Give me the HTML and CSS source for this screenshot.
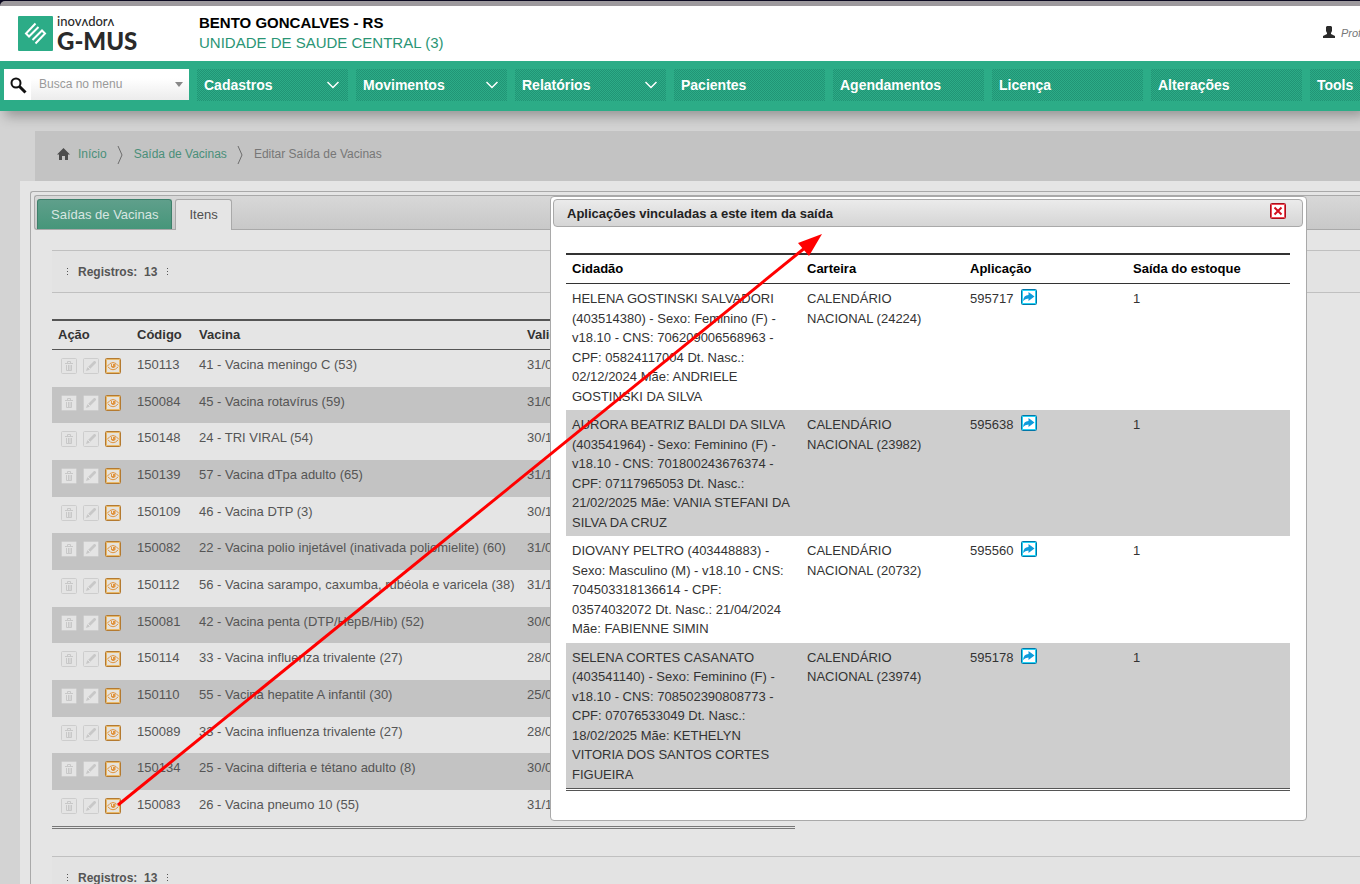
FILE: index.html
```html
<!DOCTYPE html>
<html lang="pt-BR">
<head>
    <meta charset="UTF-8">
    <meta name="viewport" content="width=device-width, initial-scale=1.0">
    <title>G-MUS - Editar Saída de Vacinas</title>
    <link rel="stylesheet" href="styles.css">
</head>
<body>
    <!-- Icon definitions -->
    <svg class="sprite" aria-hidden="true">
        <symbol id="icon-trash" viewBox="0 0 16 16">
            <rect x="0.5" y="0.5" width="15" height="15" rx="1" fill="#e4e4e4" stroke="#cdcdcd"/>
            <path d="M4 5.5h8M6.5 5V3.5h3V5" fill="none" stroke="#c8c8c8"/>
            <path d="M5.5 7v5.5h5V7" fill="none" stroke="#c8c8c8"/>
            <path d="M7.5 7v5M9 7v5" stroke="#c8c8c8"/>
        </symbol>
        <symbol id="icon-edit" viewBox="0 0 16 16">
            <rect x="0.5" y="0.5" width="15" height="15" rx="1" fill="#e4e4e4" stroke="#cdcdcd"/>
            <path d="M3 13l1-3 7-7h1l1 1v1l-7 7z" fill="#c8c8c8"/>
            <path d="M5 9l2 2" stroke="#e4e4e4"/>
        </symbol>
        <symbol id="icon-view" viewBox="0 0 16 16">
            <rect x="0.5" y="0.5" width="15" height="15" rx="1" fill="#e6e3dd" stroke="#b47a30"/>
            <rect x="1.5" y="1.5" width="13" height="13" fill="none" stroke="#e8b868"/>
            <path d="M2 8.5Q5 4.5 8 4.500Q11 4.500 14 8.500" fill="none" stroke="#df9440"/>
            <path d="M3 9Q8 14.500 13 9" fill="none" stroke="#df9440"/>
            <path d="M6 6h4.500v2.500L9 10H7.500L6 8.500z" fill="#df9440"/>
            <rect x="7" y="6" width="1" height="2" fill="#f4e6d0"/>
        </symbol>
        <symbol id="icon-share" viewBox="0 0 16 16">
            <rect x="0.5" y="0.5" width="15" height="15" rx="1" fill="#fff" stroke="#0077a8"/>
            <rect x="1.5" y="1.5" width="13" height="13" fill="none" stroke="#25d2f5"/>
            <path d="M2 12Q2.500 6 7.500 6V3L13.500 7.500L7.500 12V9.500Q4 9.500 2 12z" fill="#0e9cdb"/>
        </symbol>
        <symbol id="icon-chevron" viewBox="0 0 12 8">
            <path d="M0.5 1L6 6.5L11.5 1" fill="none" stroke="#fff" stroke-width="1.5"/>
        </symbol>
        <symbol id="icon-separator" viewBox="0 0 6 18">
            <path d="M1 0L5 9L1 18" fill="none" stroke="#6c6c6c"/>
        </symbol>
    </svg>

    <div class="window-edge"></div>

    <header class="header">
        <a href="#" class="logo" aria-label="Inovadora G-MUS">
            <svg class="logo-mark" viewBox="0 0 35 35" aria-hidden="true">
                <rect width="35" height="35" rx="1" fill="#2cac87"/>
                <path d="M17.5 7.5L8 17.5L11 20.5L20.5 11M17.5 27.5L27 17.5L24 14.5L14.5 24" fill="none" stroke="#fff" stroke-width="2"/>
            </svg>
            <span class="logo-text">
                <span class="logo-small">inovʌdorʌ</span>
                <span class="logo-big">G-MUS</span>
            </span>
        </a>
        <div class="unit">
            <strong>BENTO GONCALVES - RS</strong>
            <span>UNIDADE DE SAUDE CENTRAL (3)</span>
        </div>
        <div class="user">
            <svg width="12" height="12" viewBox="0 0 12 12" aria-hidden="true">
                <path d="M4 0h4l1 1v4L8 7v1l4 2v2H0v-2l4-2V7L3 5V1z" fill="#2b2b2b"/>
            </svg>
            <span>Profissional</span>
        </div>
    </header>

    <nav class="menu">
        <div class="search">
            <label for="busca" aria-label="Busca no menu">
                <svg width="17" height="17" viewBox="0 0 17 17" aria-hidden="true">
                    <circle cx="6" cy="6" r="4.500" fill="none" stroke="#111" stroke-width="2"/>
                    <path d="M9.500 9.500L15.500 15.500" stroke="#111" stroke-width="3"/>
                </svg>
            </label>
            <input type="text" id="busca" placeholder="Busca no menu">
            <span class="search-arrow"></span>
        </div>
        <a href="#" class="menu-item">Cadastros<svg class="chevron"><use href="#icon-chevron"/></svg></a>
        <a href="#" class="menu-item">Movimentos<svg class="chevron"><use href="#icon-chevron"/></svg></a>
        <a href="#" class="menu-item">Relatórios<svg class="chevron"><use href="#icon-chevron"/></svg></a>
        <a href="#" class="menu-item">Pacientes</a>
        <a href="#" class="menu-item">Agendamentos</a>
        <a href="#" class="menu-item">Licença</a>
        <a href="#" class="menu-item">Alterações</a>
        <a href="#" class="menu-item">Tools</a>
    </nav>

    <div class="breadcrumb">
        <svg class="home" viewBox="0 0 13 12" aria-hidden="true">
            <path d="M6.500 0L13 6.500H11V12H8V8H5V12H2V6.500H0z" fill="#4d4d4d"/>
        </svg>
        <a href="#">Início</a>
        <svg class="separator"><use href="#icon-separator"/></svg>
        <a href="#">Saída de Vacinas</a>
        <svg class="separator"><use href="#icon-separator"/></svg>
        <span>Editar Saída de Vacinas</span>
    </div>

    <main class="page">
        <div class="tabs">
            <div class="tab-bar">
                <a href="#" class="tab">Saídas de Vacinas</a>
                <a href="#" class="tab active">Itens</a>
            </div>

            <div class="tab-content">
                <div class="records"><span class="dots"></span>Registros:&nbsp; 13<span class="dots"></span></div>

                <table class="grid items">
                    <colgroup><col class="col-action"><col class="col-code"><col class="col-vaccine"><col></colgroup>
                    <thead>
                        <tr><th>Ação</th><th>Código</th><th>Vacina</th><th>Validade</th></tr>
                    </thead>
                    <tbody id="itemRows"></tbody>
                </table>

                <div class="records"><span class="dots"></span>Registros:&nbsp; 13<span class="dots"></span></div>
            </div>
        </div>
    </main>

    <!-- Linked applications dialog -->
    <section class="dialog" role="dialog" aria-labelledby="dialogTitle">
        <div class="dialog-title">
            <h2 id="dialogTitle">Aplicações vinculadas a este item da saída</h2>
            <button type="button" aria-label="Fechar">
                <svg width="16" height="16" viewBox="0 0 16 16" aria-hidden="true">
                    <rect x="0.5" y="0.5" width="15" height="15" rx="1" fill="#fff" stroke="#a80f1c"/>
                    <rect x="1.5" y="1.5" width="13" height="13" fill="none" stroke="#ef4a55"/>
                    <path d="M4.500 4.500L11.500 11.500M11.500 4.500L4.500 11.500" stroke="#d3101f" stroke-width="2"/>
                </svg>
            </button>
        </div>
        <table class="grid applications">
            <colgroup><col class="col-citizen"><col class="col-card"><col class="col-card"><col></colgroup>
            <thead>
                <tr><th>Cidadão</th><th>Carteira</th><th>Aplicação</th><th>Saída do estoque</th></tr>
            </thead>
            <tbody>
                <tr>
                    <td>HELENA GOSTINSKI SALVADORI (403514380) - Sexo: Feminino (F) - v18.10 - CNS: 706209006568963 - CPF: 05824117004 Dt. Nasc.: 02/12/2024 Mãe: ANDRIELE GOSTINSKI DA SILVA</td>
                    <td>CALENDÁRIO NACIONAL (24224)</td>
                    <td>595717 <a href="#" class="share" aria-label="Abrir aplicação 595717"><svg class="icon"><use href="#icon-share"/></svg></a></td>
                    <td>1</td>
                </tr>
                <tr>
                    <td>AURORA BEATRIZ BALDI DA SILVA (403541964) - Sexo: Feminino (F) - v18.10 - CNS: 701800243676374 - CPF: 07117965053 Dt. Nasc.: 21/02/2025 Mãe: VANIA STEFANI DA SILVA DA CRUZ</td>
                    <td>CALENDÁRIO NACIONAL (23982)</td>
                    <td>595638 <a href="#" class="share" aria-label="Abrir aplicação 595638"><svg class="icon"><use href="#icon-share"/></svg></a></td>
                    <td>1</td>
                </tr>
                <tr>
                    <td>DIOVANY PELTRO (403448883) - Sexo: Masculino (M) - v18.10 - CNS: 704503318136614 - CPF: 03574032072 Dt. Nasc.: 21/04/2024 Mãe: FABIENNE SIMIN</td>
                    <td>CALENDÁRIO NACIONAL (20732)</td>
                    <td>595560 <a href="#" class="share" aria-label="Abrir aplicação 595560"><svg class="icon"><use href="#icon-share"/></svg></a></td>
                    <td>1</td>
                </tr>
                <tr>
                    <td>SELENA CORTES CASANATO (403541140) - Sexo: Feminino (F) - v18.10 - CNS: 708502390808773 - CPF: 07076533049 Dt. Nasc.: 18/02/2025 Mãe: KETHELYN VITORIA DOS SANTOS CORTES FIGUEIRA</td>
                    <td>CALENDÁRIO NACIONAL (23974)</td>
                    <td>595178 <a href="#" class="share" aria-label="Abrir aplicação 595178"><svg class="icon"><use href="#icon-share"/></svg></a></td>
                    <td>1</td>
                </tr>
            </tbody>
        </table>
    </section>

    <!-- Arrow from the last item to the dialog -->
    <svg class="arrow" width="830" height="820" viewBox="0 0 830 820" aria-hidden="true">
        <path d="M118 805L806 247" stroke="#f00" stroke-width="3"/>
        <path d="M822 234L798 243L809 256z" fill="#f00"/>
    </svg>

    <script src="script.js"></script>
</body>
</html>
```
FILE: styles.css
```css
* {
    margin: 0;
    padding: 0;
    box-sizing: border-box;
}

body {
    position: relative;
    height: 100vh;
    overflow: hidden;
    background: #d3d3d3;
    font-family: "Liberation Sans", Arial, sans-serif;
    font-size: 13px;
    color: #333;
}

a {
    text-decoration: none;
}

.sprite {
    display: none;
}

.window-edge {
    padding-top: 1px;
    background: #0b0920;
}

.window-edge::after {
    content: "";
    display: block;
    height: 5px;
    background: #9d999d;
    border-radius: 5px 0 0 0;
}

/* Header */
.header {
    position: relative;
    z-index: 1;
    display: flex;
    height: 55px;
    padding: 0 0 0 18px;
    background: #fff;
    white-space: nowrap;
}

.logo {
    display: flex;
    gap: 4px;
    width: 181px;
    padding-top: 10px;
    color: #2a2a2a;
}

.logo-mark {
    width: 35px;
    height: 35px;
}

.logo-text {
    display: flex;
    flex-direction: column;
    font-family: Lato, "Open Sans", sans-serif;
}

.logo-small {
    font-size: 13px;
    line-height: 11px;
    font-weight: 500;
}

.logo-big {
    font-size: 24px;
    line-height: 27px;
    font-weight: 900;
}

.unit {
    display: flex;
    flex-direction: column;
    flex: 1;
    padding-top: 7px;
    font-size: 15px;
    line-height: 20px;
}

.unit strong {
    color: #000;
}

.unit span {
    color: #2a9575;
}

.user {
    display: flex;
    gap: 6px;
    width: 37px;
    padding-top: 20px;
    font-size: 11px;
    line-height: 14px;
    font-style: italic;
    color: #777;
}

.user svg {
    flex-shrink: 0;
}

/* Menu */
.menu {
    display: flex;
    gap: 8px;
    height: 50px;
    padding: 8px 0 0 4px;
    background: #2cac87;
    box-shadow: 5px 5px 12px rgba(0, 0, 0, 0.3);
}

.search {
    display: flex;
    flex-shrink: 0;
    align-items: center;
    width: 185px;
    height: 31px;
    padding-right: 6px;
    background: linear-gradient(#fff 30%, #ececec);
}

.search label {
    width: 27px;
    height: 31px;
    padding: 8px 0 0 6px;
    background: #fff;
}

.search input {
    flex: 1;
    min-width: 0;
    height: 31px;
    padding: 0 8px 2px;
    border: none;
    background: none;
    font-family: inherit;
    font-size: 12px;
}

.search input::placeholder {
    color: #999;
}

.search-arrow {
    border: 4px solid transparent;
    border-top: 5px solid #888;
    border-bottom: none;
}

.menu-item {
    display: flex;
    flex-shrink: 0;
    align-items: center;
    justify-content: space-between;
    width: 151px;
    height: 32px;
    padding: 0 9px 0 7px;
    background: conic-gradient(#219475 25%, #2cac87 0 50%, #219475 0 75%, #2cac87 0) 0 0 / 2px 2px;
    color: #fff;
    font-size: 14px;
    font-weight: bold;
}

.chevron {
    width: 12px;
    height: 8px;
}

/* Breadcrumb */
.breadcrumb {
    display: flex;
    align-items: center;
    height: 50px;
    margin: 20px 0 0 35px;
    padding: 0 22px 4px;
    background: #c3c3c3;
    color: #777;
    font-size: 12px;
}

.breadcrumb a {
    color: #4a8f79;
}

.home {
    width: 13px;
    height: 12px;
    margin-right: 8px;
}

.separator {
    width: 6px;
    height: 18px;
    margin: 2px 11px 0 10px;
}

/* Page and tabs */
.page {
    height: 100%;
    margin-left: 20px;
    padding: 10px 0 0 10px;
    background: #e5e5e5;
}

.tabs {
    height: 100%;
    padding: 3px 0 0 3px;
    border: 1px solid #a9a9a9;
    border-right: none;
    border-radius: 3px 0 0 0;
}

.tab-bar {
    display: flex;
    gap: 3px;
    height: 35px;
    padding: 3px 0 0 2px;
    background: linear-gradient(#d8d8d8, #c8c8c8);
    border: 1px solid #a9a9a9;
    border-right: none;
    border-radius: 3px 0 0 3px;
}

.tab {
    height: 30px;
    padding: 0 13px;
    background: linear-gradient(#5f9f8b, #46967a);
    border: 1px solid #3d7f6a;
    border-bottom: none;
    border-radius: 3px 3px 0 0;
    line-height: 30px;
    color: #d8e6e1;
}

.tab.active {
    height: 31px;
    background: #e5e5e5;
    border-color: #a9a9a9;
    color: #4f4f4f;
}

.tab-content {
    padding: 20px 0 0 18px;
}

.records {
    display: flex;
    align-items: center;
    gap: 10px;
    height: 43px;
    padding-left: 15px;
    background: #e3e3e3;
    border-top: 1px solid #c0c0c0;
    border-bottom: 1px solid #c0c0c0;
    color: #555;
    font-size: 12px;
    font-weight: bold;
}

.dots {
    width: 1px;
    height: 7px;
    background: repeating-linear-gradient(#555 0 1px, transparent 1px 3px);
}

/* Tables */
.grid {
    border-collapse: separate;
    border-spacing: 0;
    table-layout: fixed;
    border-top: 2px solid #333;
    border-bottom: 3px double #555;
    line-height: 1.5;
}

.grid th {
    height: 29px;
    padding: 0 6px;
    border-bottom: 1px solid #333;
    text-align: left;
    color: #000;
}

.grid td {
    padding: 5px 6px 4px;
    vertical-align: top;
}

.grid tr:nth-child(even) td {
    background: #cecece;
}

.icon {
    width: 16px;
    height: 16px;
}

.items {
    width: 743px;
    margin: 26px 0 27px;
    border-top-color: #555;
    border-bottom-color: #777;
    white-space: nowrap;
}

.items th {
    border-bottom-color: #555;
    color: #333;
}

.items td {
    height: 37px;
    color: #555;
}

.items tr:nth-child(3n + 2) td,
.items tr:last-child td {
    height: 36px;
}

.items tr:nth-child(even) td {
    background: #c3c3c3;
}

.col-action {
    width: 79px;
}

.col-code {
    width: 62px;
}

.col-vaccine {
    width: 328px;
}

.actions {
    display: flex;
    gap: 6px;
    padding: 3px 0 0 3px;
}

.actions button,
.dialog-title button {
    width: 16px;
    height: 16px;
    border: none;
    background: none;
    cursor: pointer;
}

.actions svg,
.dialog-title svg,
.share svg {
    display: block;
}

/* Dialog */
.dialog {
    position: absolute;
    top: 196px;
    left: 550px;
    width: 757px;
    padding: 2px 3px 29px 2px;
    background: #fff;
    border: 1px solid #a9a9a9;
    border-radius: 4px;
}

.dialog-title {
    display: flex;
    justify-content: space-between;
    height: 28px;
    padding: 3px 16px 0 13px;
    background: linear-gradient(#ebebeb, #d5d5d5);
    border: 1px solid #a9a9a9;
    border-radius: 4px;
}

.dialog-title h2 {
    font-size: 13px;
    line-height: 21px;
    color: #222;
}

.applications {
    width: 724px;
    margin: 26px 0 0 13px;
}

.col-citizen {
    width: 235px;
}

.col-card {
    width: 163px;
}

.share {
    display: inline-block;
    height: 16px;
    margin-left: 4px;
    vertical-align: -2px;
}

.arrow {
    position: absolute;
    top: 0;
    left: 0;
    z-index: 2;
    pointer-events: none;
}
```
FILE: script.js
```js
const items = [
    ['150113', '41 - Vacina meningo C (53)', '31/08/2026'],
    ['150084', '45 - Vacina rotavírus (59)', '31/08/2026'],
    ['150148', '24 - TRI VIRAL (54)', '30/11/2026'],
    ['150139', '57 - Vacina dTpa adulto (65)', '31/12/2026'],
    ['150109', '46 - Vacina DTP (3)', '30/11/2026'],
    ['150082', '22 - Vacina polio injetável (inativada poliomielite) (60)', '31/08/2026'],
    ['150112', '56 - Vacina sarampo, caxumba, rubéola e varicela (38)', '31/12/2026'],
    ['150081', '42 - Vacina penta (DTP/HepB/Hib) (52)', '30/09/2026'],
    ['150114', '33 - Vacina influenza trivalente (27)', '28/02/2026'],
    ['150110', '55 - Vacina hepatite A infantil (30)', '25/08/2026'],
    ['150089', '33 - Vacina influenza trivalente (27)', '28/02/2026'],
    ['150134', '25 - Vacina difteria e tétano adulto (8)', '30/09/2026'],
    ['150083', '26 - Vacina pneumo 10 (55)', '31/12/2026']
];

const actions = [['trash', 'Excluir'], ['edit', 'Editar'], ['view', 'Visualizar']];

document.getElementById('itemRows').innerHTML = items.map(function(item) {
    const buttons = actions.map(function(action) {
        return '<button type="button" aria-label="' + action[1] + ' ' + item[0] + '">' +
            '<svg class="icon"><use href="#icon-' + action[0] + '"/></svg></button>';
    }).join('');

    return '<tr><td><div class="actions">' + buttons + '</div></td><td>' + item.join('</td><td>') + '</td></tr>';
}).join('');
```
